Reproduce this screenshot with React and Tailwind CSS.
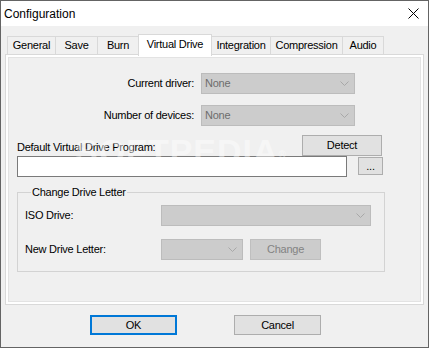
import React from "react";

function Chevron() {
  return (
    <svg width="9" height="5" viewBox="0 0 9 5" className="shrink-0">
      <polyline points="0.5,0.5 4.5,4.5 8.5,0.5" fill="none" stroke="#a8a8a8" strokeWidth="1" />
    </svg>
  );
}

function Combo({ className, value }) {
  return (
    <div className={`flex h-[21px] items-center justify-between border border-[#bcbcbc] bg-[#cccccc] pl-[3px] pr-[5px] text-[#6d6d6d] ${className}`}>
      <span>{value}</span>
      <Chevron />
    </div>
  );
}

function Tab({ label, className, selected }) {
  if (selected) {
    return (
      <div className={`relative z-10 -ml-px mb-[-2px] flex h-[22px] items-start justify-center border border-b-0 border-[#d9d9d9] bg-white pt-[3px] ${className}`}>
        {label}
      </div>
    );
  }
  return (
    <div className={`-ml-px flex h-[18px] items-center justify-center border border-b-0 border-[#d9d9d9] bg-[#f0f0f0] first:ml-0 ${className}`}>
      {label}
    </div>
  );
}

export default function App() {
  return (
    <div className="relative flex h-[348px] w-[429px] flex-col border border-[#646464] bg-[#f0f0f0] font-['Liberation_Sans',Arial,sans-serif] text-[11px] leading-[13px] tracking-[-0.25px] text-black">
      {/* title bar */}
      <div className="flex h-[25px] items-center justify-between bg-white pl-[3px] pr-[9px]">
        <span className="text-[12px] leading-[14px] tracking-normal">Configuration</span>
        <svg width="11" height="11" viewBox="0 0 11 11">
          <path d="M0.5 0.5 L10.5 10.5 M10.5 0.5 L0.5 10.5" stroke="#000" strokeWidth="1" />
        </svg>
      </div>

      {/* tabs */}
      <div className="ml-[6px] mt-[8px] flex h-[20px] items-end">
        <Tab label="General" className="w-[49px]" />
        <Tab label="Save" className="w-[43px]" />
        <Tab label="Burn" className="w-[42px]" />
        <Tab label="Virtual Drive" className="w-[74px]" selected />
        <Tab label="Integration" className="w-[60px]" />
        <Tab label="Compression" className="w-[73px]" />
        <Tab label="Audio" className="w-[42px]" />
      </div>

      {/* tab page */}
      <div className="ml-[4px] h-[251px] w-[419px] border border-[#d9d9d9] bg-white">
        <div className="flex h-full flex-col border-2 border-white">
          <div className="flex flex-1 flex-col border border-[#e3e3e3] bg-[#f0f0f0]">
            <div className="mt-[15px] flex items-center">
              <span className="w-[185px] text-right">Current driver:</span>
              <Combo className="ml-[7px] w-[154px]" value="None" />
            </div>
            <div className="mt-[11px] flex items-center">
              <span className="w-[185px] text-right">Number of devices:</span>
              <Combo className="ml-[7px] w-[154px]" value="None" />
            </div>

            <div className="ml-[8px] mt-[9px] flex items-end">
              <span className="w-[285px] pb-[2px]">Default Virtual Drive Program:</span>
              <button className="h-[21px] w-[80px] border border-[#adadad] bg-[#e1e1e1]">Detect</button>
            </div>
            <div className="ml-[8px] flex items-start">
              <div className="h-[21px] w-[330px] border border-[#7a7a7a] bg-white"></div>
              <button className="ml-[11px] mt-[1px] flex h-[18px] w-[25px] items-start justify-center border border-[#adadad] bg-[#e1e1e1] pt-[2px]">...</button>
            </div>

            <fieldset className="ml-[8px] mt-[9px] w-[368px] border border-[#d3d3d3] pb-[11px] pl-[7px]">
              <legend className="ml-[6px] px-[1px]">Change Drive Letter</legend>
              <div className="mt-[6px] flex items-center">
                <span className="w-[136px]">ISO Drive:</span>
                <Combo className="w-[210px]" value="" />
              </div>
              <div className="mt-[13px] flex items-center">
                <span className="w-[136px]">New Drive Letter:</span>
                <Combo className="w-[82px]" value="" />
                <button className="ml-[7px] h-[21px] w-[71px] border border-[#bfbfbf] bg-[#cccccc] text-[#838383]">Change</button>
              </div>
            </fieldset>
          </div>
        </div>
      </div>

      {/* dialog buttons */}
      <div className="ml-[89px] mt-[10px] flex">
        <button className="h-[20px] w-[87px] border-2 border-[#0078d7] bg-[#e1e1e1]">OK</button>
        <button className="ml-[57px] h-[20px] w-[87px] border border-[#adadad] bg-[#e1e1e1]">Cancel</button>
      </div>

      {/* watermark */}
      <span className="pointer-events-none absolute left-[74px] top-[132px] text-[34px] font-bold leading-[36px] tracking-[1px] text-white opacity-45">
        SOFTPEDIA<sup className="text-[10px]">®</sup>
      </span>
    </div>
  );
}
